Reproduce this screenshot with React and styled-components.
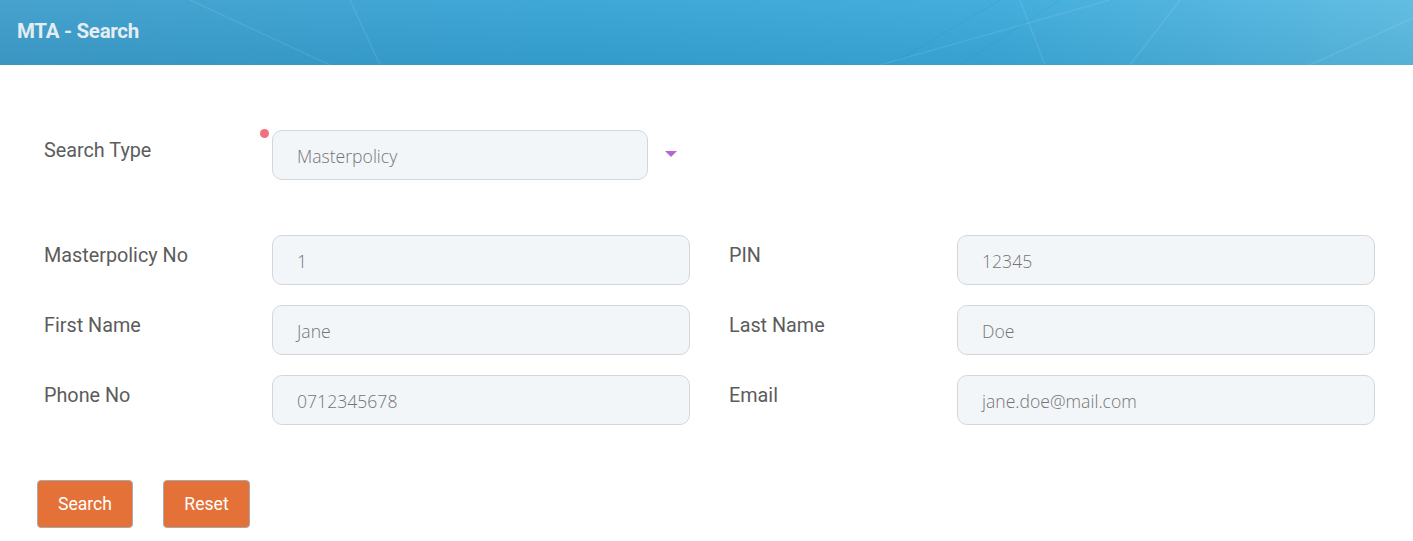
import React from "react"
import styled, { createGlobalStyle } from "styled-components"

const GlobalStyle = createGlobalStyle`
  html, body {
    margin: 0;
    padding: 0;
    background: #ffffff;
    font-family: Roboto, "Liberation Sans", sans-serif;
  }
`

const Page = styled.div`
  width: 1413px;
  min-height: 541px;
  background: #fff;
`

const Header = styled.header`
  position: relative;
  height: 65px;
  display: flex;
  align-items: center;
  padding-left: 17px;
  overflow: hidden;
  background: linear-gradient(180deg, rgba(255, 255, 255, 0.05) 0%, rgba(0, 0, 0, 0.05) 100%),
    linear-gradient(90deg, #3d9dcb 0%, #35a3d5 40%, #3aa9da 70%, #5bbae1 100%);
`

const Lines = styled.svg`
  position: absolute;
  inset: 0;
  pointer-events: none;
`

const Title = styled.h1`
  position: relative;
  margin: 0 0 3px;
  font-size: 20.5px;
  font-weight: 700;
  color: #e4edf2;
  letter-spacing: -0.3px;
`

const Body = styled.main`
  padding: 65px 38px 0 44px;
`

const TypeRow = styled.div`
  display: grid;
  grid-template-columns: 228px 376px auto;
  align-items: start;
`

const Label = styled.label`
  font-size: 19.8px;
  color: #5c5c5c;
  padding-top: 10px;
  line-height: 22px;
`

const Required = styled.div`
  position: relative;
`

const Dot = styled.span`
  position: absolute;
  left: -12px;
  top: -1px;
  width: 9px;
  height: 9px;
  border-radius: 50%;
  background: #f2707f;
`

const Box = styled.div`
  height: 50px;
  box-sizing: border-box;
  display: flex;
  align-items: center;
  padding: 1px 0 0 24px;
  border: 1px solid #d3d7dc;
  border-radius: 10px;
  background: #f3f6f9;
  font-family: "Open Sans", sans-serif;
  font-weight: 300;
  font-size: 17.6px;
  color: #747474;
`

const Caret = styled.span`
  margin: 21px 0 0 17px;
  width: 0;
  height: 0;
  border-left: 6px solid transparent;
  border-right: 6px solid transparent;
  border-top: 6px solid #b866cf;
`

const Fields = styled.div`
  margin-top: 55px;
  display: grid;
  grid-template-columns: 1fr 1fr;
  column-gap: 39px;
  row-gap: 20px;
`

const Field = styled.div`
  display: grid;
  grid-template-columns: 228px 1fr;
  align-items: start;
`

const Buttons = styled.div`
  margin: 55px 0 0 -7px;
  display: flex;
  gap: 30px;
`

const Button = styled.button`
  width: ${p => p.$width}px;
  height: 48px;
  padding: 0;
  border: 1px solid #a9a9a9;
  border-radius: 4px;
  background: #e47138;
  color: #fff;
  font-family: Roboto, sans-serif;
  font-size: 17.6px;
  cursor: pointer;
`

const fields = [
  ["Masterpolicy No", "1"],
  ["PIN", "12345"],
  ["First Name", "Jane"],
  ["Last Name", "Doe"],
  ["Phone No", "0712345678"],
  ["Email", "jane.doe@mail.com"],
]

const App = () => (
  <Page>
    <GlobalStyle />
    <Header>
      <Lines width="1413" height="65">
        <g stroke="#ffffff" strokeOpacity="0.09" strokeWidth="1.5" fill="none">
          <line x1="190" y1="0" x2="330" y2="65" />
          <line x1="350" y1="0" x2="380" y2="65" />
          <line x1="1020" y1="0" x2="1045" y2="65" />
          <line x1="1110" y1="0" x2="880" y2="65" />
          <line x1="1180" y1="0" x2="1130" y2="65" />
          <line x1="1413" y1="18" x2="1310" y2="65" />
        </g>
        <g stroke="#1f8fc4" strokeOpacity="0.2" strokeWidth="1" fill="none">
          <line x1="1000" y1="0" x2="890" y2="65" />
          <line x1="1060" y1="0" x2="960" y2="65" />
        </g>
      </Lines>
      <Title>MTA - Search</Title>
    </Header>
    <Body>
      <TypeRow>
        <Label>Search Type</Label>
        <Required>
          <Dot />
          <Box>Masterpolicy</Box>
        </Required>
        <Caret />
      </TypeRow>
      <Fields>
        {fields.map(([label, value]) => (
          <Field key={label}>
            <Label>{label}</Label>
            <Box>{value}</Box>
          </Field>
        ))}
      </Fields>
      <Buttons>
        <Button $width={96}>Search</Button>
        <Button $width={87}>Reset</Button>
      </Buttons>
    </Body>
  </Page>
)

export default App
